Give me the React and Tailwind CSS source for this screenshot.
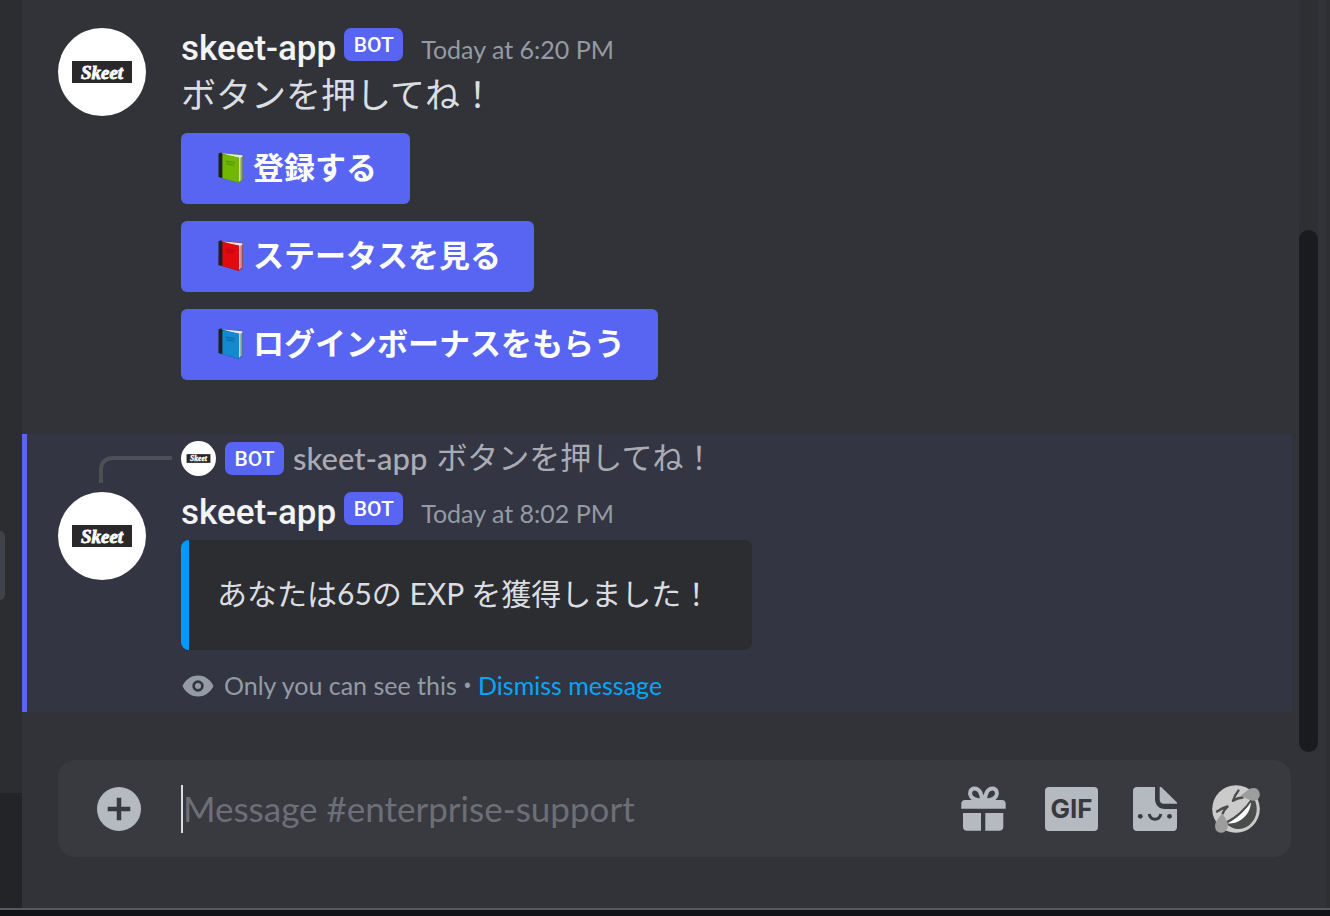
const bookColors = {
  green: { cover: '#72b800', edge: '#5a8f12', label: '#5c9a08' },
  red: { cover: '#e00a0f', edge: '#9e1b22', label: '#b80a10' },
  blue: { cover: '#1289d0', edge: '#1a6390', label: '#0f6fae' },
};

const actions = [
  { label: '登録する', book: 'green' },
  { label: 'ステータスを見る', book: 'red' },
  { label: 'ログインボーナスをもらう', book: 'blue' },
];

function BookIcon({ color }) {
  const c = bookColors[color];
  return (
    <svg viewBox="0 0 31 31" className="w-[31px] h-[31px] shrink-0" aria-hidden="true">
      <path d="M5.5.5 28.7 3v25l-4.2 3L4.5 25z" fill={c.edge} />
      <path d="M7.5 1.2 28.4 3.2v1.6L26.6 6v22.6l-1.6 1.2V6z" fill="#e9e9e4" />
      <path d="M27.6 5v23" stroke="#8f9a86" strokeWidth="1.4" />
      <path d="M7.6 2.2 25.200 5.600v25L7.600 25.800z" fill={c.cover} />
      <path d="M4.500 1.600 7 .6 8.400 2.200v23.800L4.500 25z" fill="#1c2126" />
      <path d="M11.500 9.200 21 10.800M12.500 11.800l7.500 1.300" stroke={c.label} strokeWidth="1.400" />
    </svg>
  );
}

function Logo({ className }) {
  return (
    <svg viewBox="0 0 88 88" className={className} role="img" aria-label="skeet-app">
      <circle cx="44" cy="44" r="44" fill="#fff" />
      <rect x="14" y="33" width="60" height="22" fill="#2a2829" />
      <text
        x="44"
        y="51"
        textAnchor="middle"
        fill="#fff"
        stroke="#fff"
        strokeWidth=".8"
        fontFamily="Liberation Serif, serif"
        fontSize="19"
        fontStyle="italic"
        fontWeight="700"
      >
        Skeet
      </text>
    </svg>
  );
}

function BotTag() {
  return (
    <span className="w-[59px] h-[33px] shrink-0 rounded-[7px] bg-[#5865f2] text-white text-[21px] leading-[34px] font-['Roboto',sans-serif] font-medium text-center">
      BOT
    </span>
  );
}

function MessageHeader({ time }) {
  return (
    <div className="h-12 flex items-start">
      <span className="font-['Roboto',sans-serif] text-[35px] leading-[50px] font-medium text-[#f2f3f5]">
        skeet-app
      </span>
      <span className="ml-2 mt-1 flex">
        <BotTag />
      </span>
      <time className="ml-[18px] text-[25px] leading-[50px] text-[#949ba4]">{time}</time>
    </div>
  );
}

function EyeIcon() {
  return (
    <svg viewBox="0 0 32 22" className="w-8 h-[22px]" aria-hidden="true">
      <path
        fill="#949ba4"
        fillRule="evenodd"
        d="M16 .5C8.500.5 3 5.500.5 11 3 16.500 8.500 21.500 16 21.500S29 16.500 31.500 11C29 5.500 23.500.5 16 .5zm0 4.800a5.700 5.700 0 1 1 0 11.400 5.700 5.700 0 0 1 0-11.400z"
      />
      <circle cx="16" cy="11" r="3" fill="#949ba4" />
    </svg>
  );
}

function GiftIcon() {
  return (
    <svg viewBox="0 0 48 48" className="size-12" fill="#b5bac1" aria-hidden="true">
      <path d="M5 15h37c2.200 0 3.700 1.500 3.700 3.700v5H1.300v-5C1.300 16.500 2.800 15 5 15z" />
      <path d="M3 28h18v17.700H7c-2.500 0-4-1.500-4-4zM25.300 28h18v13.700c0 2.500-1.500 4-4 4h-14z" />
      <path
        d="M22 15.500C21.800 7.500 18.600 3.200 14.300 3.400c-3.800.2-5.400 4.600-3.300 8 1.400 2.300 5 4 11 4.100zM25 15.500C25.200 7.500 28.400 3.200 32.700 3.400c3.800.2 5.400 4.600 3.300 8-1.400 2.300-5 4-11 4.100z"
        fill="none"
        stroke="#b5bac1"
        strokeWidth="4"
        strokeLinejoin="round"
      />
    </svg>
  );
}

function StickerIcon() {
  return (
    <svg viewBox="0 0 44 44" className="size-11" fill="#b5bac1" aria-hidden="true">
      <path d="M4 0h18v12c0 6 4 10 10 10h12v18c0 2.500-1.500 4-4 4H4c-2.500 0-4-1.500-4-4V4c0-2.500 1.500-4 4-4z" />
      <path d="M26.700 0h1.500L44 15.500v1.300H31c-2.800 0-4.300-1.600-4.300-4.300z" />
      <circle cx="7.300" cy="29.300" r="2.400" fill="#383a40" />
      <circle cx="36.500" cy="29.300" r="2.400" fill="#383a40" />
      <path d="M16.200 27c1.400 7 10.200 7 11.600 0" fill="none" stroke="#383a40" strokeWidth="3" />
    </svg>
  );
}

function RoflIcon() {
  return (
    <svg viewBox="0 0 48 48" className="size-12" aria-hidden="true">
      <circle cx="24" cy="24" r="23.800" fill="#cbcbcb" />
      <path d="M40 14C34 24 26 32 14 38.500 20 45 30 46 37.500 40 45 33.500 47 22.500 42 13.500z" fill="#4b4d4c" />
      <path d="M38.800 16.500C34 24.500 26 33 15.500 38.300 27 40 39.500 29 38.800 16.500z" fill="#fff" />
      <path d="M40.500 13.500C34 23.500 26 31.500 13.500 38" fill="none" stroke="#4b4d4c" strokeWidth="2" />
      <path
        d="M26.500 5.500c-2.500 3-4.300 6.500-5.500 10.300 3-2 6-3 9.500-3.300M5 26.500c3.200-2.400 6.500-4 10.500-5-2.200 2-3.800 4.200-4.800 7"
        fill="none"
        stroke="#4b4d4c"
        strokeWidth="2.400"
        strokeLinecap="round"
        strokeLinejoin="round"
      />
      <path d="M28.500 10.500C33 8 36.500 3 41.500 3c4.200 0 6.500 3.500 6.300 7-.3 4-3.800 6.500-8 5.500-4.300-1-7.300-3.500-11.300-5z" fill="#9d9d9d" />
      <path d="M10 28.500C13.500 32.500 17 38 15.500 43c-1.300 4-5 5.500-8.300 4.500-3.400-1-4.600-4.500-4-8 .8-4.300 4.300-7 6.800-11z" fill="#9d9d9d" />
    </svg>
  );
}

function AddIcon() {
  return (
    <svg viewBox="0 0 44 44" className="size-11" aria-hidden="true">
      <circle cx="22" cy="22" r="22" fill="#b5bac1" />
      <path d="M22 10.700v22.600M10.700 22h22.600" stroke="#383a40" strokeWidth="4.500" />
    </svg>
  );
}

export default function App() {
  return (
    <div className="min-h-screen flex flex-col bg-[#111217] font-['Lato','Noto_Sans_CJK_JP',sans-serif]">
      <div className="flex-1 flex bg-[#313338]">
        {/* Edge of the channel sidebar */}
        <aside className="w-[22px] shrink-0 flex flex-col bg-[#2b2d31]">
          <div className="flex-1 pt-[531px]">
            <div className="w-[5px] h-[69px] rounded-r-lg bg-[#404249]" />
          </div>
          <div className="h-[115px] bg-[#232428]" />
        </aside>

        <main className="flex-1 min-w-0 flex flex-col">
          <div className="flex-1 flex pr-2">
            <div className="flex-1 min-w-0 pr-[7px]">
              {/* Message with action buttons */}
              <article className="flex pl-9 pt-6">
                <Logo className="size-[88px] mt-1 shrink-0" />
                <div className="ml-[35px] min-w-0">
                  <MessageHeader time="Today at 6:20 PM" />
                  <p className="pb-1 text-[35px] leading-[44px] text-[#dbdee1]">ボタンを押してね！</p>
                  <div className="mt-[13px] flex flex-col items-start gap-[17px]">
                    {actions.map((action) => (
                      <button
                        key={action.label}
                        type="button"
                        className="h-[71px] px-[33px] pb-[2px] flex items-center gap-2 rounded-md bg-[#5865f2] text-white text-[31px] font-bold"
                      >
                        <BookIcon color={action.book} />
                        {action.label}
                      </button>
                    ))}
                  </div>
                </div>
              </article>

              {/* Ephemeral reply */}
              <article className="mt-[54px] pt-[7px] pb-[6px] pl-[31px] border-l-[5px] border-[#5865f2] bg-[#333542]">
                <div className="flex items-center h-[35px] text-[31px] text-[#a9acb5]">
                  <div className="w-[73px] h-[27px] ml-[41px] mr-[9px] mt-[22px] shrink-0 rounded-tl-[13px] border-t-4 border-l-4 border-[#4e5058]" />
                  <Logo className="size-[35px] shrink-0" />
                  <span className="ml-[9px] flex">
                    <BotTag />
                  </span>
                  <span className="ml-[9px] font-medium">skeet-app</span>
                  <span className="ml-[9px] pb-[2px]">ボタンを押してね！</span>
                </div>

                <div className="mt-3 flex">
                  <Logo className="size-[88px] mt-1 shrink-0" />
                  <div className="ml-[35px] min-w-0">
                    <MessageHeader time="Today at 8:02 PM" />
                    <div className="mt-1 h-[110px] pl-7 pr-[41px] pb-1 flex items-center rounded-lg border-l-8 border-[#0099ff] bg-[#2b2d31] text-[30px] text-[#dbdee1]">
                      あなたは65の EXP を獲得しました！
                    </div>
                    <div className="mt-4 h-10 flex items-center text-[25px] text-[#949ba4]">
                      <span className="ml-[1px] mr-[10px]">
                        <EyeIcon />
                      </span>
                      <span>
                        Only you can see this <span className="font-['Roboto',sans-serif]">•</span>{' '}
                        <a href="#dismiss" className="text-[#00a8fc]">Dismiss message</a>
                      </span>
                    </div>
                  </div>
                </div>
              </article>
            </div>

            {/* Scrollbar */}
            <div className="w-[19px] shrink-0 flex flex-col rounded-b-full bg-[#2d2f33]">
              <div className="grow-[230]" />
              <div className="grow-[522] rounded-full bg-[#1a1b1e]" />
            </div>
          </div>

          {/* Message box */}
          <form className="mt-2 mb-[51px] ml-9 mr-[35px] h-[97px] pl-[39px] pr-[31px] flex items-center rounded-[17px] bg-[#383a40]">
            <button type="button" aria-label="Add attachment">
              <AddIcon />
            </button>
            <span className="ml-10 w-[2px] h-12 shrink-0 bg-[#dbdee1]" />
            <input
              type="text"
              aria-label="Message #enterprise-support"
              placeholder="Message #enterprise-support"
              className="flex-1 min-w-0 h-12 bg-transparent outline-none text-[35px] text-[#dbdee1] placeholder:text-[#6d6f78]"
            />
            <div className="flex items-center">
              <button type="button" aria-label="Send a gift">
                <GiftIcon />
              </button>
              <button
                type="button"
                className="ml-[37px] w-[53px] h-[44px] rounded-[4px] bg-[#b5bac1] text-[#383a40] font-['Inter',sans-serif] text-[26px] leading-[44px] font-bold"
              >
                GIF
              </button>
              <button type="button" aria-label="Stickers" className="ml-[35px]">
                <StickerIcon />
              </button>
              <button type="button" aria-label="Emoji" className="ml-[35px]">
                <RoflIcon />
              </button>
            </div>
          </form>
        </main>
        <div className="w-1 shrink-0 bg-[#2e2f32]" />
      </div>
      <div className="h-2 border-t-2 border-[#57585b]" />
    </div>
  );
}
